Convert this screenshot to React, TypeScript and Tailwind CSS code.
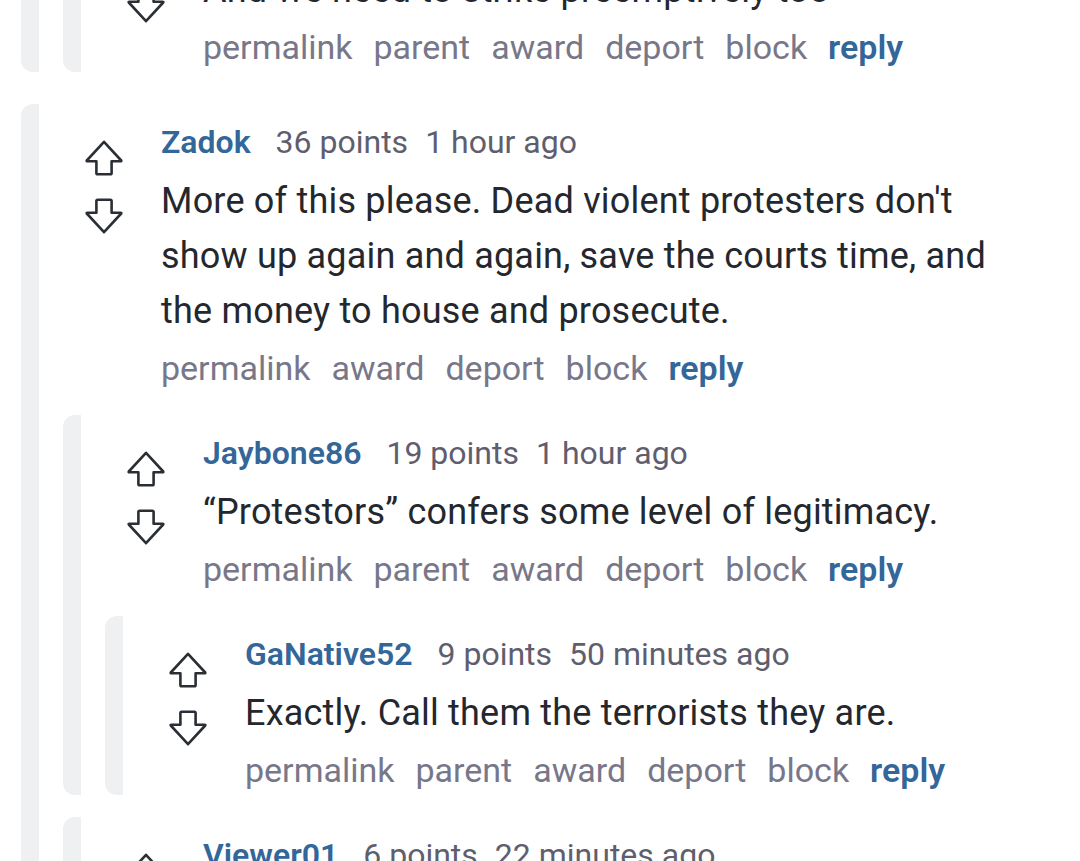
import type { ReactNode } from 'react';

interface CommentData {
  user: string;
  points: number;
  age: string;
  body: string;
  parent?: boolean;
  children?: CommentData[];
}

function VoteArrow({ down }: { down?: boolean }) {
  return (
    <svg
      width="38"
      height="36"
      viewBox="0 0 38 36"
      fill="none"
      stroke="#2a2e35"
      strokeWidth="2.6"
      strokeLinejoin="round"
      strokeLinecap="round"
      className={down ? 'rotate-180' : ''}
    >
      <path d="M19 1.8 L36.2 20.5 Q36.6 21.3 35.6 21.3 H26.6 V33 Q26.6 34.3 25.3 34.3 H12.7 Q11.4 34.3 11.4 33 V21.3 H2.4 Q1.4 21.3 1.8 20.5 Z" />
    </svg>
  );
}

function Actions({ parent }: { parent?: boolean }) {
  const items = parent
    ? ['permalink', 'parent', 'award', 'deport', 'block']
    : ['permalink', 'award', 'deport', 'block'];
  return (
    <div className="mt-[4px] flex h-[50px] items-center gap-[21px] text-[34px] text-[#78778a]">
      {items.map((a) => (
        <span key={a}>{a}</span>
      ))}
      <span className="font-semibold text-[#336699]">reply</span>
    </div>
  );
}

function Thread({ children }: { children: ReactNode }) {
  return (
    <div className="rounded-l-[12px] border-l-[18px] border-[#eff0f2] pl-[24px]">{children}</div>
  );
}

function Comment({ c }: { c: CommentData }) {
  return (
    <div className="rounded-l-[12px] border-l-[18px] border-[#eff0f2] pt-[15px] pl-[24px]">
      <div className="flex">
        {/* vote column */}
        <div className="flex w-[98px] shrink-0 flex-col gap-[22px] pt-[21px] pl-[22px]">
          <VoteArrow />
          <VoteArrow down />
        </div>
        <div className="min-w-0 flex-1">
          <div className="flex h-[46px] items-center text-[32px] text-[#5f5e6e]">
            <span className="mr-[25px] font-semibold text-[#336699]">{c.user}</span>
            <span className="mr-[17px]">{c.points} points</span>
            <span>{c.age}</span>
          </div>
          <p className="mt-[9px] text-[36px] leading-[55px] tracking-[0.2px] text-[#24282e]">
            {c.body}
          </p>
          <Actions parent={c.parent} />
        </div>
      </div>
      {c.children && c.children.length > 0 && (
        <div className="mt-[22px] flex flex-col gap-[22px]">
          {c.children.map((ch) => (
            <Comment key={ch.user} c={ch} />
          ))}
        </div>
      )}
    </div>
  );
}

const above: CommentData = {
  user: 'Patriot1776',
  points: 41,
  age: '2 hours ago',
  body: 'And we need to strike preemptively too',
  parent: true,
};

const thread: CommentData = {
  user: 'Zadok',
  points: 36,
  age: '1 hour ago',
  body: "More of this please. Dead violent protesters don't show up again and again, save the courts time, and the money to house and prosecute.",
  children: [
    {
      user: 'Jaybone86',
      points: 19,
      age: '1 hour ago',
      body: '\u201CProtestors\u201D confers some level of legitimacy.',
      parent: true,
      children: [
        {
          user: 'GaNative52',
          points: 9,
          age: '50 minutes ago',
          body: 'Exactly. Call them the terrorists they are.',
          parent: true,
        },
      ],
    },
    {
      user: 'Viewer01',
      points: 6,
      age: '22 minutes ago',
      body: 'Agreed.',
      parent: true,
    },
  ],
};

export default function App() {
  return (
    <div
      className="h-[861px] overflow-hidden bg-white pr-[46px] pl-[21px]"
      style={{ fontFamily: 'Roboto, "Noto Sans", sans-serif' }}
    >
      <div className="-mt-[107px] flex flex-col gap-[32px]">
        <Thread>
          <Comment c={above} />
        </Thread>
        <Comment c={thread} />
      </div>
    </div>
  );
}
